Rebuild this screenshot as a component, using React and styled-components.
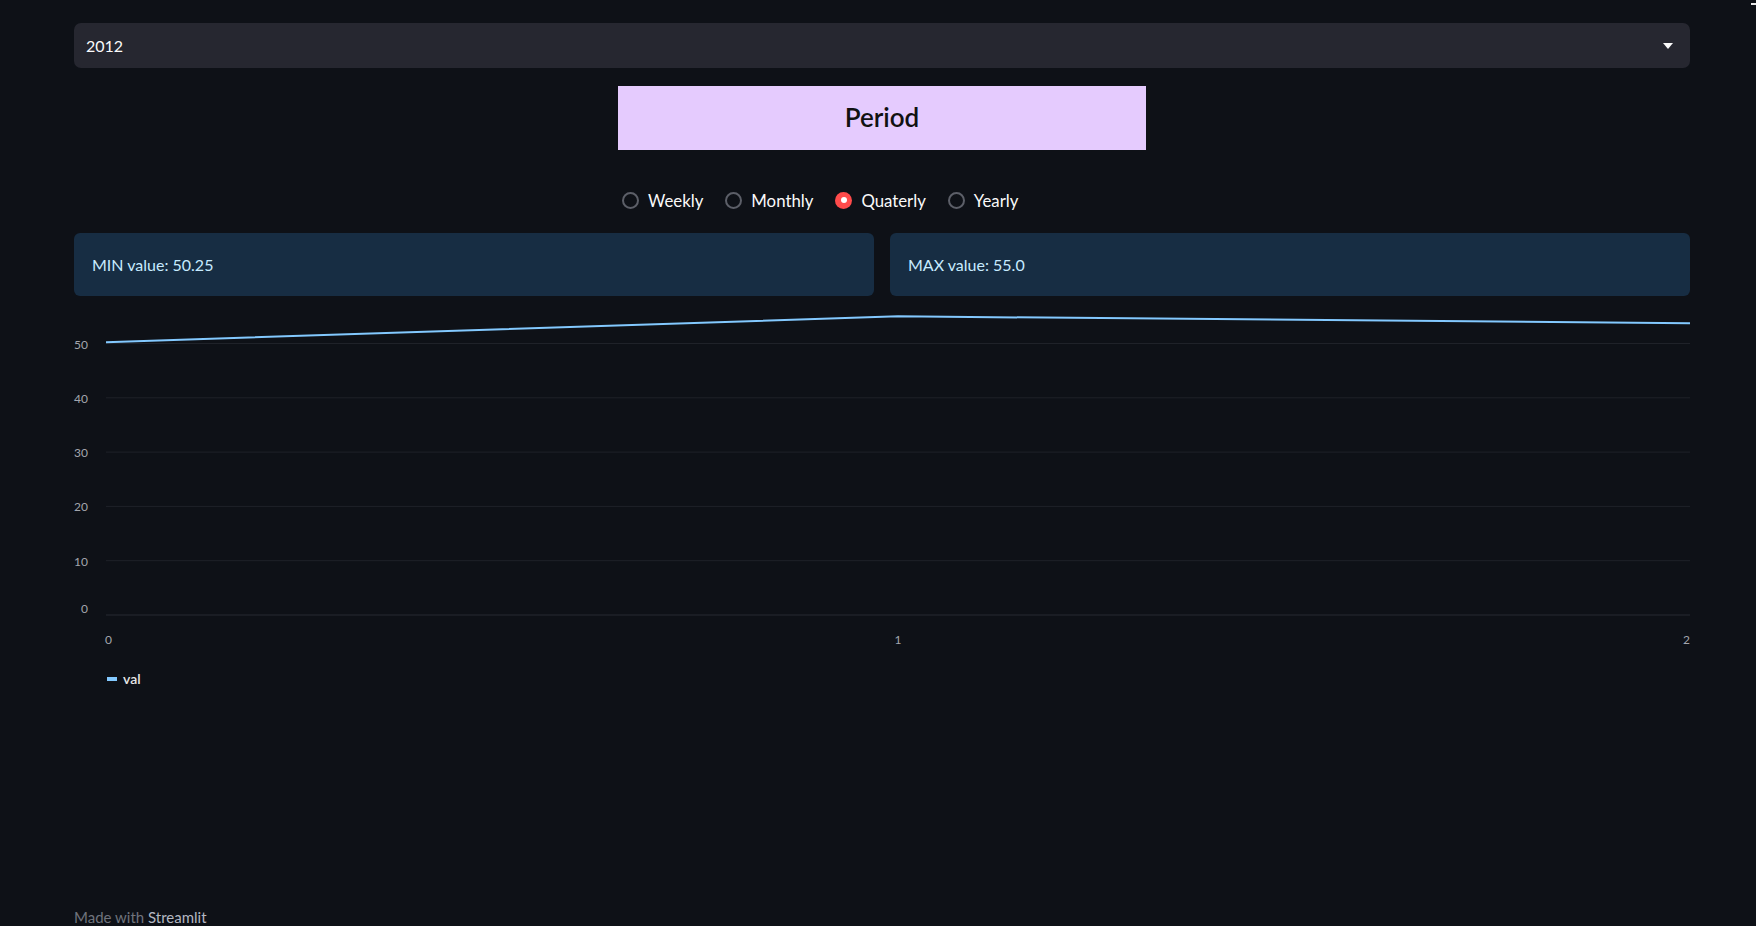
import React from 'react';
import styled, { createGlobalStyle } from 'styled-components';

const GlobalStyle = createGlobalStyle`
  html, body {
    margin: 0;
    padding: 0;
    background: #0e1117;
    overflow: hidden;
  }
  body {
    font-family: "Source Sans Pro", Lato, "Noto Sans", sans-serif;
    color: #fafafa;
  }
`;

const Page = styled.div`
  position: relative;
  height: 926px;
  padding: 23px 66px 0 74px;
  box-sizing: border-box;
`;

const CornerMark = styled.div`
  position: absolute;
  top: 3px;
  right: 0;
  width: 5px;
  height: 2px;
  background: #e8e8e8;
`;

const Select = styled.div`
  display: flex;
  align-items: center;
  justify-content: space-between;
  height: 45px;
  padding: 0 17px 0 12px;
  background: #262730;
  border-radius: 7px;
  font-size: 16px;
  color: #fafafa;
`;

const Caret = styled.span`
  width: 0;
  height: 0;
  border-left: 5px solid transparent;
  border-right: 5px solid transparent;
  border-top: 6px solid #fafafa;
`;

const Columns = styled.div`
  display: grid;
  grid-template-columns: repeat(3, 1fr);
  column-gap: 16px;
  margin-top: 18px;
`;

const Middle = styled.div`
  grid-column: 2;
  display: flex;
  flex-direction: column;
`;

const TitleBox = styled.div`
  height: 64px;
  box-sizing: border-box;
  padding-bottom: 3px;
  display: flex;
  align-items: center;
  justify-content: center;
  background: #e5cbfe;
  color: #111;
  font-size: 26px;
  font-weight: 600;
`;

const RadioRow = styled.div`
  display: flex;
  align-items: center;
  margin-top: 41px;
  padding-left: 4px;
  height: 18px;
`;

const RadioItem = styled.label`
  display: flex;
  align-items: center;
  gap: 9px;
  margin-right: 22px;
  font-size: 16.8px;
  color: #fafafa;
`;

const Dot = styled.span`
  width: 17px;
  height: 17px;
  border-radius: 50%;
  box-sizing: border-box;
  display: flex;
  align-items: center;
  justify-content: center;
  border: ${p => (p.$on ? 'none' : '2px solid #5c5f68')};
  background: ${p => (p.$on ? '#ff4b4b' : 'transparent')};

  &::after {
    content: '';
    width: 6px;
    height: 6px;
    border-radius: 50%;
    background: ${p => (p.$on ? '#fff' : 'transparent')};
  }
`;

const Metrics = styled.div`
  display: grid;
  grid-template-columns: 1fr 1fr;
  column-gap: 16px;
  margin-top: 24px;
`;

const Alert = styled.div`
  height: 63px;
  display: flex;
  align-items: center;
  padding-left: 18px;
  background: #172d43;
  border-radius: 6px;
  color: #c7ebff;
  font-size: 16px;
`;

const ChartWrap = styled.div`
  margin-top: 4px;
`;

const Legend = styled.div`
  display: flex;
  align-items: center;
  gap: 6px;
  margin-top: 22px;
  padding-left: 33px;
  font-size: 14px;
  font-weight: 600;
  color: #e6e6e6;
`;

const Swatch = styled.span`
  width: 10px;
  height: 4px;
  background: #83c9ff;
`;

const Footer = styled.div`
  position: absolute;
  left: 74px;
  top: 908px;
  font-size: 15px;
  color: #6f737c;

  b {
    font-weight: 400;
    color: #b4b8c2;
  }
`;

const options = ['Weekly', 'Monthly', 'Quaterly', 'Yearly'];
const data = [50.25, 55.0, 53.75];
const ticks = [0, 10, 20, 30, 40, 50];

const W = 1616;
const X0 = 32;
const Y0 = 315;
const K = 5.43;
const labelFont = "'Source Sans Pro', Lato, sans-serif";

const Chart = () => {
  const xs = data.map((_, i) => X0 + (i * (W - X0)) / (data.length - 1));
  const pts = data.map((v, i) => `${xs[i]},${Y0 - v * K}`).join(' ');
  return (
    <svg width={W} height={348} style={{ display: 'block', overflow: 'visible' }}>
      {ticks.map(t => (
        <g key={t}>
          <line x1={X0} x2={W} y1={Y0 - t * K} y2={Y0 - t * K} stroke={t === 0 ? '#262a33' : '#1f2229'} strokeWidth="1" />
          <text
            x={14}
            y={t === 0 ? Y0 - 5 : Y0 - t * K + 2}
            textAnchor="end"
            dominantBaseline="middle"
            fontSize="12"
            fill="#a3a6ad"
            fontFamily={labelFont}
          >
            {t}
          </text>
        </g>
      ))}
      {xs.map((x, i) => (
        <text
          key={i}
          x={i === 0 ? x - 1 : x}
          y={341}
          textAnchor={i === 0 ? 'start' : i === xs.length - 1 ? 'end' : 'middle'}
          dominantBaseline="middle"
          fontSize="12"
          fill="#a3a6ad"
          fontFamily={labelFont}
        >
          {i}
        </text>
      ))}
      <polyline points={pts} fill="none" stroke="#83c9ff" strokeWidth="2" />
    </svg>
  );
};

export default function App() {
  return (
    <>
      <GlobalStyle />
      <Page>
        <CornerMark />
        <Select>
          <span>2012</span>
          <Caret />
        </Select>
        <Columns>
          <Middle>
            <TitleBox>Period</TitleBox>
            <RadioRow>
              {options.map(o => (
                <RadioItem key={o}>
                  <Dot $on={o === 'Quaterly'} />
                  {o}
                </RadioItem>
              ))}
            </RadioRow>
          </Middle>
        </Columns>
        <Metrics>
          <Alert>MIN value: 50.25</Alert>
          <Alert>MAX value: 55.0</Alert>
        </Metrics>
        <ChartWrap>
          <Chart />
          <Legend>
            <Swatch />
            val
          </Legend>
        </ChartWrap>
        <Footer>
          Made with <b>Streamlit</b>
        </Footer>
      </Page>
    </>
  );
}
